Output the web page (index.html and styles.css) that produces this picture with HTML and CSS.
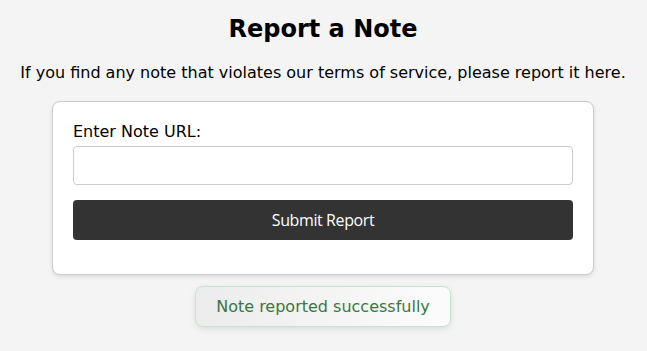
FILE: index.html
```html
<!DOCTYPE html>
<html lang="en">
	<head>
		<meta charset="utf-8">
		<title>Report a Note</title>
		<link rel="stylesheet" href="styles.css">
	</head>
	<body>
		<h1>Report a Note</h1>
		<p class="intro">If you find any note that violates our terms of service, please report it here.</p>
		<form class="card" onsubmit="return false;">
			<label for="url">Enter Note URL:</label>
			<input type="text" id="url" name="url">
			<button type="submit">Submit Report</button>
		</form>
		<div class="toast">Note reported successfully</div>
	</body>
</html>
```

FILE: styles.css
```css
body {
	margin: 0;
	padding: 15px 11px 15px 10px;
	background-color: #f4f4f4;
	font-family: "DejaVu Sans", sans-serif;
	color: #000;
	display: flex;
	flex-direction: column;
	align-items: center;
}

h1 {
	font-size: 24px;
	line-height: 28px;
	margin: 0 0 20px;
}

.intro {
	font-size: 16px;
	line-height: 19px;
	margin: 0 0 19px;
}

.card {
	box-sizing: border-box;
	width: 542px;
	padding: 20px 20px 34px;
	background-color: #fff;
	border: 1px solid #ccc;
	border-radius: 8px;
	box-shadow: 0 2px 4px rgba(0, 0, 0, 0.1);
	display: flex;
	flex-direction: column;
}

	.card label {
		font-size: 16px;
		line-height: 19px;
		margin-bottom: 5px;
	}

	.card input {
		box-sizing: border-box;
		height: 39px;
		border: 1px solid #ccc;
		border-radius: 4px;
		margin-bottom: 15px;
	}

	.card button {
		height: 40px;
		border: none;
		border-radius: 4px;
		background-color: #333;
		color: #fff;
		font-family: "Open Sans", sans-serif;
		font-size: 16px;
		letter-spacing: -0.4px;
	}

.toast {
	margin-top: 11px;
	padding: 10px 20px;
	line-height: 19px;
	border: 1px solid #c3e6cb;
	border-radius: 8px;
	background: linear-gradient(to right, #ececec, #fcfcfc);
	box-shadow: 0 2px 6px rgba(0, 0, 0, 0.1);
	color: #3c763d;
	font-size: 16px;
}
```
